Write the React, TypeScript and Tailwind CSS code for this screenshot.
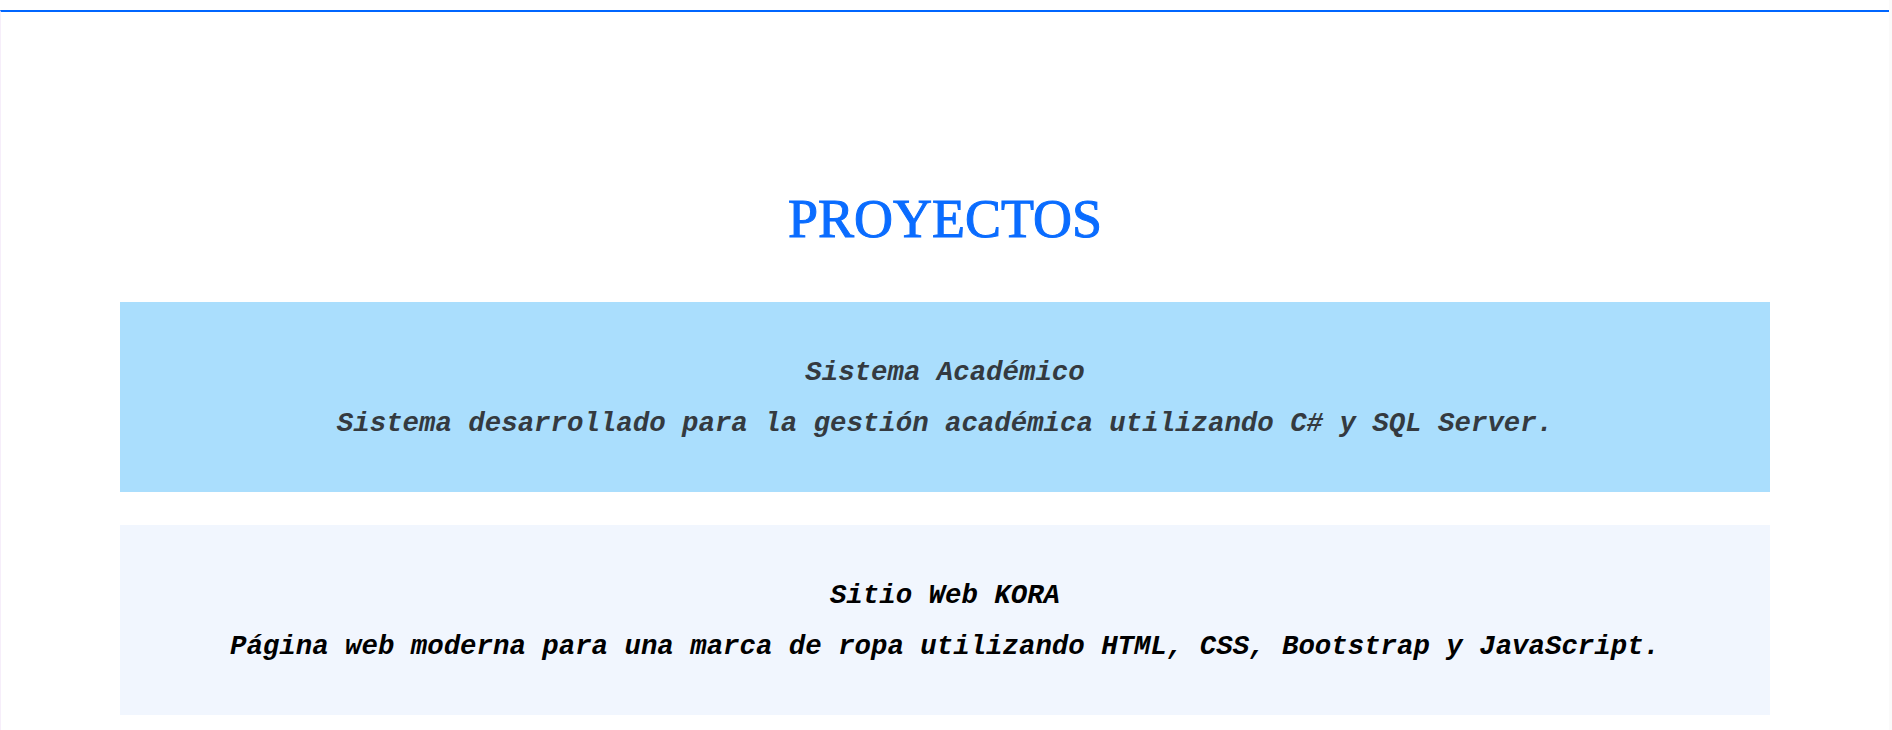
export default function App() {
  const projects = [
    {
      title: "Sistema Académico",
      text: "Sistema desarrollado para la gestión académica utilizando C# y SQL Server.",
      card: "bg-[#aadefd] text-[#343a40]",
    },
    {
      title: "Sitio Web KORA",
      text: "Página web moderna para una marca de ropa utilizando HTML, CSS, Bootstrap y JavaScript.",
      card: "bg-[#f1f6fe] text-black",
    },
  ];

  return (
    <div className="flex min-h-[730px] bg-white">
      <section className="mt-[10px] flex-1 border-t-2 border-l border-[#0066ff] border-l-[#f6eefa] pb-[15px]">
        <h2 className="pt-[180px] text-center font-['Liberation_Serif',serif] text-[54px] leading-[54px] text-[#0a6cff] [-webkit-text-stroke:1px_#0a6cff]">
          PROYECTOS
        </h2>
        <div className="mt-[56px] flex flex-col gap-[33px] px-[119px]">
          {projects.map((p) => (
            <div
              key={p.title}
              className={`flex h-[190px] flex-col gap-[10px] pt-[50px] text-center font-['Liberation_Mono',monospace] text-[27.4px] leading-[41px] font-bold italic ${p.card}`}
            >
              <h3>{p.title}</h3>
              <p>{p.text}</p>
            </div>
          ))}
        </div>
      </section>
      <div className="w-[3px] bg-[#fafafa]" />
    </div>
  );
}
